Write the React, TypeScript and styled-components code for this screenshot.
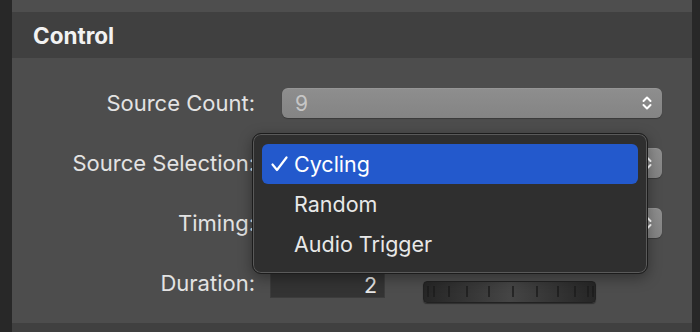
import styled, { createGlobalStyle } from "styled-components";

const GlobalStyle = createGlobalStyle`
  html, body {
    margin: 0;
    padding: 0;
    background: #2a2a2a;
    font-family: Inter, "Noto Sans", "Liberation Sans", sans-serif;
    -webkit-font-smoothing: antialiased;
  }
`;

const Window = styled.div`
  position: relative;
  display: flex;
  width: 700px;
  height: 332px;
  overflow: hidden;
  background: #2a2a2a;
`;

const SideStrip = styled.div<{ w: number }>`
  flex: 0 0 ${(p) => p.w}px;
  background: #282828;
`;

const Main = styled.div`
  flex: 1;
  display: flex;
  flex-direction: column;
`;

const TopBand = styled.div`
  height: 12px;
  background: #4e4e4e;
`;

const Header = styled.div`
  height: 46px;
  display: flex;
  align-items: center;
  padding-left: 21px;
  background: #404040;
  color: #f2f2f2;
  font-size: 22.5px;
  font-weight: 700;
`;

const Body = styled.div`
  height: 265px;
  box-sizing: border-box;
  padding-top: 30px;
  background: #4d4d4d;
  display: grid;
  grid-template-columns: 243px 1fr;
  grid-auto-rows: 30px;
  row-gap: 30px;
  column-gap: 15px;
  align-items: center;
`;

const Footer = styled.div`
  flex: 1;
  background: #404040;
`;

const Label = styled.div`
  text-align: right;
  color: #e3e3e3;
  font-size: 22px;
  white-space: nowrap;
`;

const Popup = styled.div`
  margin-left: 12px;
  width: 380px;
  height: 30px;
  box-sizing: border-box;
  border-radius: 6px;
  background: linear-gradient(#8e8e8e, #848484);
  box-shadow: inset 0 1px 0 rgba(255, 255, 255, 0.08), 0 1px 1px rgba(0, 0, 0, 0.25);
  display: flex;
  align-items: center;
  justify-content: space-between;
  padding: 0 9px 0 13px;
  color: #c6c6c6;
  font-size: 21px;
`;

const DurationRow = styled.div`
  display: flex;
  align-items: center;
  height: 30px;
  margin-top: 4px;
`;

const NumberField = styled.div`
  width: 115px;
  height: 26px;
  box-sizing: border-box;
  background: #333333;
  border: 1px solid #3c3c3c;
  display: flex;
  align-items: center;
  justify-content: flex-end;
  padding-right: 7px;
  color: #e6e6e6;
  font-size: 21.5px;
`;

const Jog = styled.div`
  margin-left: 38px;
  margin-top: 14px;
  width: 173px;
  height: 22px;
  box-sizing: border-box;
  border-radius: 4px;
  border: 1px solid #222222;
  background: linear-gradient(
    90deg,
    #262626 0%,
    #353535 25%,
    #454545 50%,
    #353535 75%,
    #262626 100%
  );
  box-shadow: 0 1px 1px rgba(0, 0, 0, 0.4);
  overflow: hidden;
`;

const Menu = styled.div`
  position: absolute;
  left: 252px;
  top: 133px;
  width: 396px;
  box-sizing: border-box;
  padding: 10px 9px 9px;
  background: #2f2f2f;
  border-radius: 9px;
  border: 1px solid #1c1c1c;
  box-shadow: inset 0 0 0 1px #5a5a5a, 0 4px 14px rgba(0, 0, 0, 0.35);
`;

const Item = styled.div<{ active?: boolean }>`
  height: 40px;
  display: flex;
  align-items: center;
  border-radius: 6px;
  padding-left: 9px;
  background: ${(p) => (p.active ? "#2359cc" : "transparent")};
  color: ${(p) => (p.active ? "#ffffff" : "#e8e8e8")};
  font-size: 21.5px;
`;

const Check = styled.span`
  width: 23px;
  display: inline-flex;
  align-items: center;
`;

const Chevrons = () => (
  <svg width="12" height="16" viewBox="0 0 12 16">
    <path
      d="M2.5 6 L6 2.5 L9.5 6 M2.5 10 L6 13.5 L9.5 10"
      fill="none"
      stroke="#ffffff"
      strokeWidth="2"
      strokeLinecap="round"
      strokeLinejoin="round"
    />
  </svg>
);

// tick marks on the jog wheel, denser toward the rolled-away edges
const ticks = [4, 10, 25, 43, 65, 89, 113, 134, 151, 164, 169];

const JogTicks = () => (
  <svg width="171" height="20" viewBox="0 0 171 20">
    {ticks.map((x) => (
      <line key={x} x1={x} y1="4" x2={x} y2="15" stroke="#1c1c1c" strokeWidth="1.5" />
    ))}
  </svg>
);

const items = ["Cycling", "Random", "Audio Trigger"];

export default function App() {
  return (
    <>
      <GlobalStyle />
      <Window>
        <SideStrip w={12} />
        <Main>
          <TopBand />
          <Header>Control</Header>
          <Body>
            <Label>Source Count:</Label>
            <Popup>
              <span>9</span>
              <Chevrons />
            </Popup>
            <Label>Source Selection:</Label>
            <Popup>
              <span />
              <Chevrons />
            </Popup>
            <Label>Timing:</Label>
            <Popup>
              <span />
              <Chevrons />
            </Popup>
            <Label>Duration:</Label>
            <DurationRow>
              <NumberField>2</NumberField>
              <Jog>
                <JogTicks />
              </Jog>
            </DurationRow>
          </Body>
          <Footer />
        </Main>
        <SideStrip w={8} />
        <Menu>
          {items.map((name, i) => (
            <Item key={name} active={i === 0}>
              <Check>
                {i === 0 && (
                  <svg width="17" height="16" viewBox="0 0 17 16">
                    <path
                      d="M1.5 8.5 L6 14 L15.5 1.5"
                      fill="none"
                      stroke="#ffffff"
                      strokeWidth="2.2"
                      strokeLinecap="round"
                      strokeLinejoin="round"
                    />
                  </svg>
                )}
              </Check>
              {name}
            </Item>
          ))}
        </Menu>
      </Window>
    </>
  );
}
